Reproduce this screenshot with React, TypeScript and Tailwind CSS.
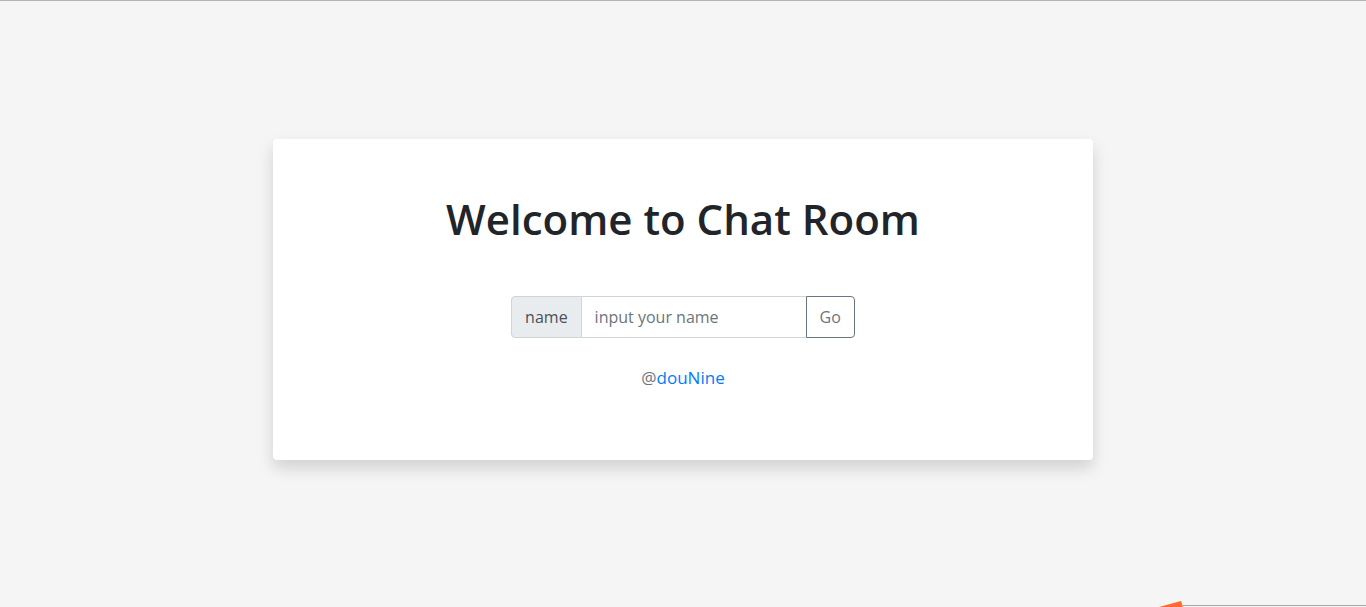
export default function App() {
  return (
    <div className="relative h-[607px] w-full overflow-hidden border-t border-[#b4b4b4] bg-[#f5f5f5] font-['Open_Sans',sans-serif]">
      <div className="flex justify-center pt-[138px]">
        <div className="flex h-[321px] w-[820px] flex-col items-center rounded bg-white pt-[56px] shadow-[0_8px_16px_rgba(0,0,0,0.15)]">
          <h1 className="text-[42px] font-semibold leading-[48px] text-[#212529]">
            Welcome to Chat Room
          </h1>
          <div className="mt-[53px] flex h-[42px] text-[16px] text-[#495057]">
            <span className="flex items-center rounded-l border border-[#ced4da] bg-[#e9ecef] px-[13px]">
              name
            </span>
            <input
              className="w-[224px] border-y border-[#ced4da] px-[13px] text-[#495057] outline-none placeholder:text-[#6c757d]"
              placeholder="input your name"
            />
            <button className="rounded-r border border-[#6c757d] px-[13px] text-[#6c757d]">
              Go
            </button>
          </div>
          <p className="mt-[27px] text-[17px] text-[#6c757d]">
            @<span className="text-[#007bff]">douNine</span>
          </p>
        </div>
      </div>
      <div className="absolute bottom-[1px] right-0 h-px w-[183px] bg-[#a8a8a8]" />
      <svg className="absolute bottom-0 right-[183px]" width="24" height="6" viewBox="0 0 24 6">
        <path d="M0 6 L22 0 L24 6 Z" fill="#ff6a33" />
      </svg>
    </div>
  );
}
